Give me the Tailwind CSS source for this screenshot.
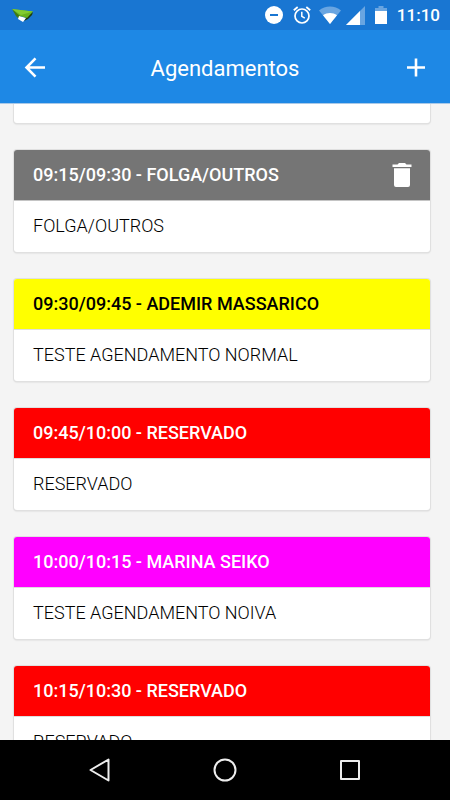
<!DOCTYPE html>
<html lang="pt-BR">
<head>
  <meta charset="UTF-8" />
  <meta name="viewport" content="width=device-width, initial-scale=1.0" />
  <title>Agendamentos</title>
  <script src="https://cdn.jsdelivr.net/npm/@tailwindcss/browser@4"></script>
</head>
<body class="bg-[#f4f4f4] h-screen flex flex-col overflow-hidden font-['Roboto',sans-serif]">
  <!-- Status bar -->
  <div class="h-[30px] shrink-0 bg-[#1976d2] flex items-center justify-between pl-3 pr-[10px] text-white">
    <svg class="w-[22px] h-[14px]" viewBox="0 0 22 14">
      <path d="M14 9l7-5-1 3-4 4-4 2z" fill="#1c3a10" />
      <path d="M0 1l9 7-2 3-3-3z" fill="#3f7a14" />
      <path d="M7 8l7 2-3 4-5-3z" fill="#fff" />
      <path d="M0 1l21 2.500L15 10 8 8z" fill="#68b31c" />
      <path d="M0 1l21 2.500L9 7z" fill="#82cc30" />
    </svg>
    <div class="flex items-center">
      <svg class="w-[18px] h-[18px]" viewBox="0 0 18 18">
        <circle cx="9" cy="9" r="9" fill="#fff" />
        <path d="M5 8h8v2H5z" fill="#1976d2" />
      </svg>
      <svg class="w-[18px] h-[18px] ml-[10px]" viewBox="0 0 18 18" fill="none" stroke="#fff">
        <circle cx="9" cy="10" r="7" stroke-width="1.700" />
        <path d="M.8 4.300L4.700 1M17.200 4.300L13.300 1" stroke-width="1.800" />
        <path d="M8.800 5.800v4.500l3 1.900" stroke-width="1.500" />
      </svg>
      <svg class="w-[22px] h-[18px] ml-2" viewBox="0 0 22 18">
        <path d="M0 4.500C6-.8 16-.8 22 4.500L11 18z" fill="#fff" fill-opacity=".35" />
        <path d="M4 9.300c4-3.200 10-3.200 14 0L11 18z" fill="#fff" />
      </svg>
      <svg class="w-[19px] h-[19px] ml-[5px]" viewBox="0 0 19 19">
        <path d="M0 19L19 0v19z" fill="#fff" fill-opacity=".35" />
        <path d="M0 19L14 5v14z" fill="#fff" />
      </svg>
      <svg class="w-3 h-[18px] ml-[10px]" viewBox="0 0 12 18">
        <path d="M3.500 0h5v2H12v3H0V2h3.500z" fill="#fff" fill-opacity=".35" />
        <path d="M0 5h12v13H0z" fill="#fff" />
      </svg>
      <span class="ml-[10px] text-[17px] leading-5 font-medium">11:10</span>
    </div>
  </div>

  <!-- Toolbar -->
  <header class="h-[74px] shrink-0 bg-[#1e88e5] border-b border-[#a9c9e8] flex items-center justify-between px-[23px] text-white">
    <button type="button" aria-label="Voltar" class="w-6 h-6">
      <svg class="w-6 h-6" viewBox="0 0 24 24" fill="none" stroke="#fff" stroke-width="2.600">
        <path d="M22 12.500H4M12.500 3.300L3.500 12.500l9 9.200" />
      </svg>
    </button>
    <h1 class="pt-1 text-[22px] leading-7">Agendamentos</h1>
    <button type="button" aria-label="Adicionar" class="w-6 h-6">
      <svg class="w-6 h-6" viewBox="0 0 24 24" fill="none" stroke="#fff" stroke-width="2.600">
        <path d="M4 12.500h18M13 3.500v18" />
      </svg>
    </button>
  </header>

  <!-- Appointments -->
  <main class="flex-1 min-h-0 overflow-hidden pl-[14px] pr-5 flex flex-col gap-[27px] text-[18px] leading-[26px] text-black">
    <article class="-mt-8 h-[51px] shrink-0 bg-white rounded-[3px] shadow-[0_0_0_1px_#e0e0e0,0_1px_2px_#00000030]"></article>

    <article class="shrink-0 bg-white rounded-[3px] overflow-hidden shadow-[0_0_0_1px_#e0e0e0,0_1px_2px_#00000030]">
      <div class="h-[51px] bg-[#757575] border-b border-[#c4c4c4] text-white flex items-center justify-between pl-[19px] pr-4">
        <h2 class="font-medium">09:15/09:30 - FOLGA/OUTROS</h2>
        <button type="button" aria-label="Excluir" class="w-6 h-6">
          <svg class="w-6 h-6" viewBox="0 0 24 24" fill="#fff">
            <path d="M2.500 1.500h5l1.500-1.500h6l1.500 1.500h5V4h-19zM4 5.200h16V22a2 2 0 0 1-2 2H6a2 2 0 0 1-2-2z" />
          </svg>
        </button>
      </div>
      <p class="h-[51px] pt-3 px-[19px] font-light">FOLGA/OUTROS</p>
    </article>

    <article class="shrink-0 bg-white rounded-[3px] overflow-hidden shadow-[0_0_0_1px_#e0e0e0,0_1px_2px_#00000030]">
      <div class="h-[51px] bg-[#ffff00] border-b border-[#dedede] flex items-center px-[19px]">
        <h2 class="font-medium">09:30/09:45 - ADEMIR MASSARICO</h2>
      </div>
      <p class="h-[51px] pt-3 px-[19px] font-light">TESTE AGENDAMENTO NORMAL</p>
    </article>

    <article class="shrink-0 bg-white rounded-[3px] overflow-hidden shadow-[0_0_0_1px_#e0e0e0,0_1px_2px_#00000030]">
      <div class="h-[51px] bg-[#ff0000] border-b border-[#dedede] text-white flex items-center px-[19px]">
        <h2 class="font-medium">09:45/10:00 - RESERVADO</h2>
      </div>
      <p class="h-[51px] pt-3 px-[19px] font-light">RESERVADO</p>
    </article>

    <article class="shrink-0 bg-white rounded-[3px] overflow-hidden shadow-[0_0_0_1px_#e0e0e0,0_1px_2px_#00000030]">
      <div class="h-[51px] bg-[#ff00ff] border-b border-[#dedede] text-white flex items-center px-[19px]">
        <h2 class="font-medium">10:00/10:15 - MARINA SEIKO</h2>
      </div>
      <p class="h-[51px] pt-3 px-[19px] font-light">TESTE AGENDAMENTO NOIVA</p>
    </article>

    <article class="shrink-0 bg-white rounded-[3px] overflow-hidden shadow-[0_0_0_1px_#e0e0e0,0_1px_2px_#00000030]">
      <div class="h-[51px] bg-[#ff0000] border-b border-[#dedede] text-white flex items-center px-[19px]">
        <h2 class="font-medium">10:15/10:30 - RESERVADO</h2>
      </div>
      <p class="h-[51px] pt-3 px-[19px] font-light">RESERVADO</p>
    </article>
  </main>

  <!-- Android navigation -->
  <nav class="h-[60px] shrink-0 bg-black flex items-center justify-center gap-[101px]">
    <button type="button" aria-label="Voltar" class="w-6 h-6">
      <svg class="w-6 h-6" viewBox="0 0 24 24" fill="none" stroke="#eee" stroke-width="2" stroke-linejoin="round">
        <path d="M20.500 1.500v21L2.500 12z" />
      </svg>
    </button>
    <button type="button" aria-label="Início" class="w-6 h-6">
      <svg class="w-6 h-6" viewBox="0 0 24 24" fill="none" stroke="#eee" stroke-width="2">
        <circle cx="12" cy="12" r="10.500" />
      </svg>
    </button>
    <button type="button" aria-label="Recentes" class="w-6 h-6">
      <svg class="w-6 h-6" viewBox="0 0 24 24" fill="none" stroke="#eee" stroke-width="2" stroke-linejoin="round">
        <path d="M3 3h18v18H3z" />
      </svg>
    </button>
  </nav>
</body>
</html>
